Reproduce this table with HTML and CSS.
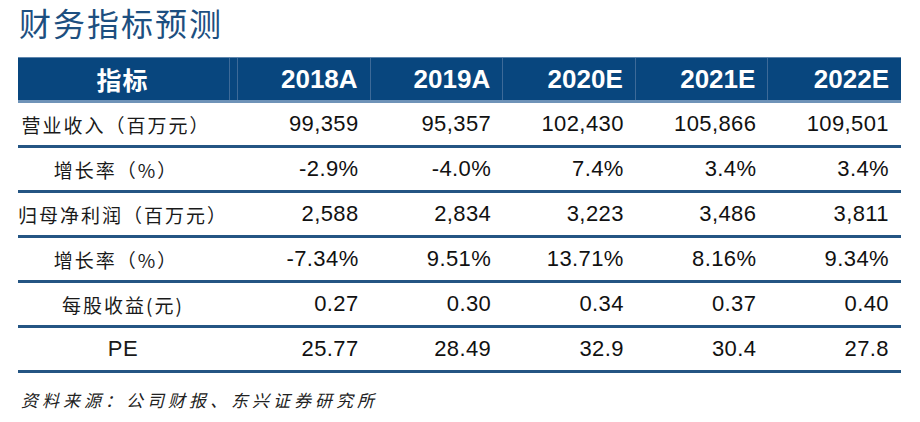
FILE: index.html
```html
<!DOCTYPE html>
<html lang="zh-CN">
<head>
<meta charset="utf-8">
<title>财务指标预测</title>
<link rel="stylesheet" href="styles.css">
</head>
<body>
<div class="page">
  <h1 class="title">财务指标预测</h1>
  <div class="table">
    <div class="row head">
      <div class="cell label">指标</div>
      <div class="cell">2018A</div>
      <div class="cell">2019A</div>
      <div class="cell">2020E</div>
      <div class="cell">2021E</div>
      <div class="cell">2022E</div>
    </div>
    <div class="row">
      <div class="cell label shift">营业收入（百万元）</div>
      <div class="cell">99,359</div>
      <div class="cell">95,357</div>
      <div class="cell">102,430</div>
      <div class="cell">105,866</div>
      <div class="cell">109,501</div>
    </div>
    <div class="row">
      <div class="cell label shift">增长率（%）</div>
      <div class="cell">-2.9%</div>
      <div class="cell">-4.0%</div>
      <div class="cell">7.4%</div>
      <div class="cell">3.4%</div>
      <div class="cell">3.4%</div>
    </div>
    <div class="row">
      <div class="cell label">归母净利润（百万元）</div>
      <div class="cell">2,588</div>
      <div class="cell">2,834</div>
      <div class="cell">3,223</div>
      <div class="cell">3,486</div>
      <div class="cell">3,811</div>
    </div>
    <div class="row">
      <div class="cell label shift">增长率（%）</div>
      <div class="cell">-7.34%</div>
      <div class="cell">9.51%</div>
      <div class="cell">13.71%</div>
      <div class="cell">8.16%</div>
      <div class="cell">9.34%</div>
    </div>
    <div class="row">
      <div class="cell label">每股收益(元)</div>
      <div class="cell">0.27</div>
      <div class="cell">0.30</div>
      <div class="cell">0.34</div>
      <div class="cell">0.37</div>
      <div class="cell">0.40</div>
    </div>
    <div class="row">
      <div class="cell label pe">PE</div>
      <div class="cell">25.77</div>
      <div class="cell">28.49</div>
      <div class="cell">32.9</div>
      <div class="cell">30.4</div>
      <div class="cell">27.8</div>
    </div>
  </div>
  <p class="source">资料来源：公司财报、东兴证券研究所</p>
</div>
</body>
</html>
```

FILE: styles.css
```css
html, body {
  margin: 0;
  padding: 0;
  background: #ffffff;
}

.page {
  width: 920px;
  height: 422px;
  overflow: hidden;
  font-family: "Liberation Sans", Arial, "Noto Sans CJK SC", sans-serif;
}

.title {
  margin: 6px 0 0 19px;
  height: 32px;
  font-family: "Noto Sans CJK SC", sans-serif;
  font-weight: 400;
  font-size: 32px;
  line-height: 32px;
  letter-spacing: 2px;
  color: #1d4f80;
}

.table {
  margin: 19px 0 0 18px;
  width: 883px;
}

.row {
  display: grid;
  grid-template-columns: 220px repeat(5, 1fr);
  height: 42px;
  border-bottom: 3px solid #245583;
  color: #111111;
  font-size: 22px;
  letter-spacing: 0.4px;
}

.row.head {
  height: 42px;
  background: #08467e;
  border-top: 1px solid #5f86ad;
  border-bottom: 3px solid #6f93b8;
  color: #ffffff;
  font-weight: 700;
  font-size: 26px;
  letter-spacing: 0;
}

.cell {
  display: flex;
  align-items: center;
  justify-content: flex-end;
  padding-right: 12px;
}

.row.head .cell {
  border-right: 1px solid #3d6a98;
}

.row.head .cell:last-child {
  border-right: none;
}

.row.head .cell.label {
  font-family: "Noto Sans CJK SC", sans-serif;
  font-weight: 700;
  font-size: 25px;
  letter-spacing: 1px;
  color: #ffffff;
  box-shadow: inset -7px 0 0 #08467e, inset -8px 0 0 #3d6a98;
}

.label {
  justify-content: center;
  padding-right: 10px;
  font-family: "Noto Sans CJK SC", sans-serif;
  font-size: 19px;
  letter-spacing: 2px;
  color: #1a1a1a;
}

.label.shift {
  padding-right: 24px;
}

.label.pe {
  font-family: "Liberation Sans", Arial, sans-serif;
  font-size: 22px;
  letter-spacing: 0.5px;
}

.source {
  margin: 17px 0 0 21px;
  font-family: "Noto Sans CJK SC", serif;
  font-style: italic;
  font-size: 17px;
  line-height: 20px;
  letter-spacing: 4px;
  color: #222222;
}
```
